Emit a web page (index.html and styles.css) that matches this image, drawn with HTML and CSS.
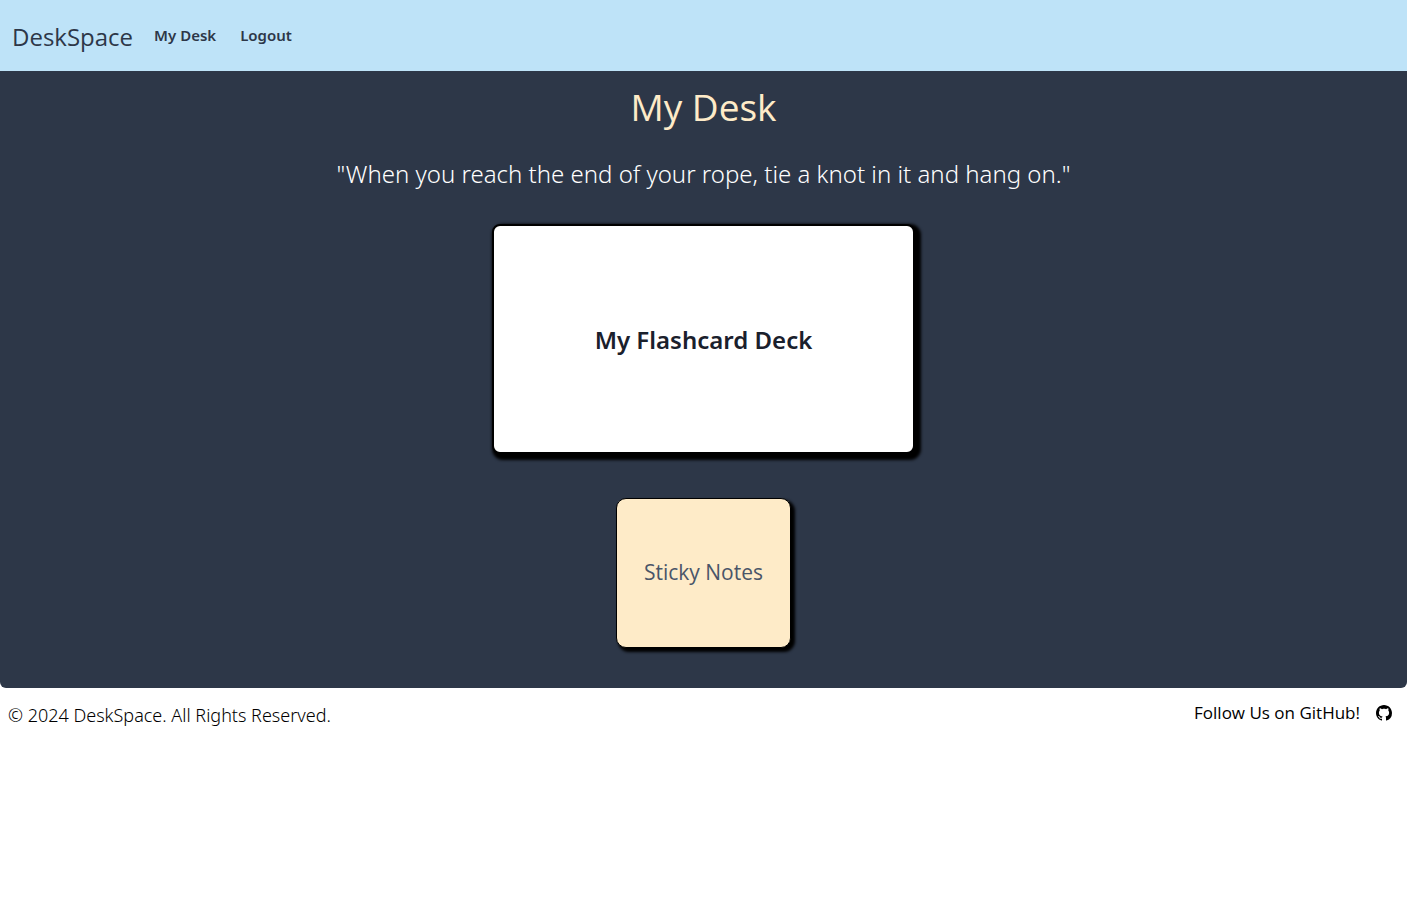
FILE: index.html
```html
<!DOCTYPE html>
<html lang="en">
<head>
<meta charset="utf-8">
<meta name="viewport" content="width=device-width, initial-scale=1">
<title>DeskSpace</title>
<link rel="stylesheet" href="styles.css">
</head>
<body>
<nav class="navbar">
  <a class="brand" href="#">DeskSpace</a>
  <a class="nav-link" href="#">My Desk</a>
  <a class="nav-link" href="#">Logout</a>
</nav>
<main class="desk">
  <h1 class="title">My Desk</h1>
  <p class="quote">"When you reach the end of your rope, tie a knot in it and hang on."</p>
  <a class="deck" href="#">My Flashcard Deck</a>
  <a class="sticky" href="#">Sticky Notes</a>
</main>
<footer class="footer">
  <p class="copyright">© 2024 DeskSpace. All Rights Reserved.</p>
  <a class="github" href="#">
    <span>Follow Us on GitHub!</span>
    <svg class="github-icon" viewBox="0 0 16 16" aria-hidden="true"><path fill="currentColor" d="M8 0C3.58 0 0 3.58 0 8c0 3.54 2.29 6.53 5.47 7.59.4.07.55-.17.55-.38 0-.19-.01-.82-.01-1.49-2.01.37-2.53-.49-2.69-.94-.09-.23-.48-.94-.82-1.13-.28-.15-.68-.52-.01-.53.63-.01 1.08.58 1.23.82.72 1.21 1.87.87 2.33.66.07-.52.28-.87.51-1.07-1.78-.2-3.64-.89-3.64-3.95 0-.87.31-1.59.82-2.15-.08-.2-.36-1.02.08-2.12 0 0 .67-.21 2.2.82.64-.18 1.32-.27 2-.27s1.36.09 2 .27c1.53-1.04 2.2-.82 2.2-.82.44 1.1.16 1.92.08 2.12.51.56.82 1.27.82 2.15 0 3.07-1.87 3.75-3.65 3.95.29.25.54.73.54 1.48 0 1.07-.01 1.93-.01 2.2 0 .21.15.46.55.38A8.01 8.01 0 0 0 16 8c0-4.42-3.58-8-8-8z"/></svg>
  </a>
</footer>
</body>
</html>
```
FILE: styles.css
```css
* { box-sizing: border-box; }
body {
  margin: 0;
  background: #fff;
  font-family: "Open Sans", "Noto Sans", sans-serif;
  color: #000;
}
a { color: inherit; text-decoration: none; }
h1, p { margin: 0; font-weight: 400; }

.navbar {
  display: flex;
  align-items: center;
  padding: 16px 12px;
  background: #bee3f8;
  color: #2d3748;
}
.brand { margin-right: 9px; padding-top: 3px; font-size: 24px; line-height: 36px; }
.nav-link {
  padding: 0 12px 2px;
  font-family: "Noto Sans", "Open Sans", sans-serif;
  font-size: 15px;
  font-weight: 600;
  line-height: 24px;
}

.desk {
  display: flex;
  flex-direction: column;
  align-items: center;
  padding: 12px 0 40px;
  background: #2d3748;
  border-radius: 0 0 6px 6px;
}
.title { color: #feebc8; font-size: 37px; line-height: 48px; }
.quote {
  margin-top: 25px;
  padding: 0 16px;
  color: #fff;
  font-family: "Noto Sans", "Open Sans", sans-serif;
  font-size: 24px;
  font-weight: 300;
  line-height: 36px;
  text-align: center;
}
.deck {
  display: flex;
  align-items: center;
  justify-content: center;
  width: 30%;
  min-width: 320px;
  height: 230px;
  margin-top: 32px;
  border: 2px solid #000;
  border-radius: 8px;
  background: #fff;
  box-shadow: 3px 3px 3px 3px #000;
  color: #1a202c;
  font-family: "Noto Sans", "Open Sans", sans-serif;
  font-size: 24px;
  font-weight: 600;
}
.sticky {
  display: flex;
  align-items: center;
  justify-content: center;
  width: 175px;
  height: 150px;
  margin-top: 44px;
  padding-bottom: 2px;
  border: 1px solid #000;
  border-radius: 10px;
  background: #feebc8;
  box-shadow: 3px 3px 3px 1px #000;
  color: #4a5568;
  font-size: 21px;
}

.footer {
  display: flex;
  align-items: flex-start;
  justify-content: space-between;
  padding: 12px 15px 12px 8px;
}
.copyright {
  padding-top: 2px;
  font-family: "Noto Sans", "Open Sans", sans-serif;
  font-size: 18px;
  font-weight: 300;
  line-height: 27px;
}
.github { display: flex; align-items: center; gap: 16px; font-size: 17px; line-height: 26px; }
.github-icon { width: 16px; height: 16px; }
```
